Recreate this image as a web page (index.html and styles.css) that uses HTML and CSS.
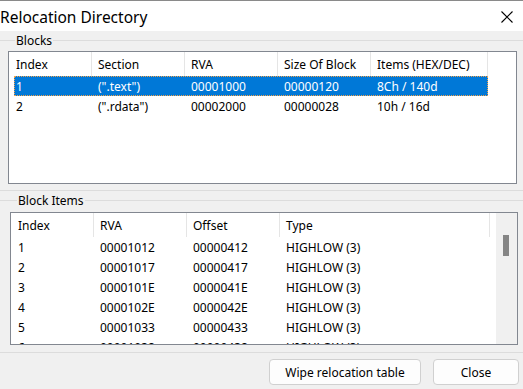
FILE: index.html
```html
<!DOCTYPE html>
<html>
<head>
<meta charset="utf-8">
<link rel="stylesheet" href="styles.css">
</head>
<body>
<div class="window">
  <div class="titlebar">
    <span class="title">Relocation Directory</span>
    <svg class="close-x" width="14" height="14" viewBox="0 0 14 14"><path d="M1.5 1.5 L12.5 12.5 M12.5 1.5 L1.5 12.5" stroke="#000" stroke-width="1.1" fill="none"/></svg>
  </div>

  <fieldset class="group group-blocks">
    <legend>Blocks</legend>
    <div class="list list-blocks">
      <div class="head head-blocks">
        <div class="th">Index</div>
        <div class="th">Section</div>
        <div class="th">RVA</div>
        <div class="th">Size Of Block</div>
        <div class="th">Items (HEX/DEC)</div>
      </div>
      <div class="row row-blocks selected">
        <div class="td first">1</div>
        <div class="td">(".text")</div>
        <div class="td">00001000</div>
        <div class="td">00000120</div>
        <div class="td">8Ch / 140d</div>
      </div>
      <div class="row row-blocks">
        <div class="td first">2</div>
        <div class="td">(".rdata")</div>
        <div class="td">00002000</div>
        <div class="td">00000028</div>
        <div class="td">10h / 16d</div>
      </div>
    </div>
  </fieldset>

  <fieldset class="group group-items">
    <legend>Block Items</legend>
    <div class="list list-items">
      <div class="items-content">
        <div class="head head-items">
          <div class="th">Index</div>
          <div class="th">RVA</div>
          <div class="th">Offset</div>
          <div class="th">Type</div>
        </div>
        <div class="row row-items"><div class="td first">1</div><div class="td">00001012</div><div class="td">00000412</div><div class="td">HIGHLOW (3)</div></div>
        <div class="row row-items"><div class="td first">2</div><div class="td">00001017</div><div class="td">00000417</div><div class="td">HIGHLOW (3)</div></div>
        <div class="row row-items"><div class="td first">3</div><div class="td">0000101E</div><div class="td">0000041E</div><div class="td">HIGHLOW (3)</div></div>
        <div class="row row-items"><div class="td first">4</div><div class="td">0000102E</div><div class="td">0000042E</div><div class="td">HIGHLOW (3)</div></div>
        <div class="row row-items"><div class="td first">5</div><div class="td">00001033</div><div class="td">00000433</div><div class="td">HIGHLOW (3)</div></div>
        <div class="row row-items"><div class="td first">6</div><div class="td">00001038</div><div class="td">00000438</div><div class="td">HIGHLOW (3)</div></div>
      </div>
      <div class="vscroll"><div class="thumb"></div></div>
    </div>
  </fieldset>

  <div class="buttons">
    <button class="btn btn-wipe">Wipe relocation table</button>
    <button class="btn btn-close">Close</button>
  </div>
</div>
</body>
</html>
```

FILE: styles.css
```css
* { box-sizing: border-box; }
html, body {
  margin: 0;
  padding: 0;
  background: #f0f0f0;
  width: 523px;
  height: 389px;
  overflow: hidden;
  font-family: "Noto Sans", "DejaVu Sans", sans-serif;
  font-size: 12px;
  color: #000;
}
.window {
  display: flex;
  flex-direction: column;
  width: 523px;
  height: 389px;
}
.titlebar {
  height: 31px;
  flex: none;
  background: #fff;
  border-top: 1px solid #8a8a8a;
  display: flex;
  align-items: center;
  justify-content: space-between;
  padding: 0 10px 0 0;
}
.title {
  font-size: 15.5px;
  line-height: 20px;
  padding-top: 1px;
}
.close-x { display: block; margin-top: 1px; margin-right: -1px; }

.group {
  margin: 2px 0 0 0;
  border: none;
  border-top: 1px solid #dcdcdc;
  border-bottom: 1px solid #dcdcdc;
  flex: none;
}
.group legend {
  font-size: 12px;
  line-height: 14px;
  padding: 1px 1px 0 1px;
  margin-left: 7px;
}
.group-blocks { padding: 3px 7px 6px 8px; }
.group-items { padding: 4px 5px 7px 10px; }

.list {
  background: #fff;
  border: 1px solid #828790;
  height: 133px;
  overflow: hidden;
}
.list-blocks { width: 509px; }
.list-items { width: 508px; display: flex; }

.head {
  display: grid;
  height: 24px;
}
.head-blocks { grid-template-columns: 83px 93px 93px 93px 117px; }
.head-items { grid-template-columns: 83px 93px 93px 210px; }
.th {
  border-right: 1px solid #e5e5e5;
  line-height: 22px;
  padding-top: 2px;
  padding-left: 6px;
  white-space: nowrap;
}
.th:first-child { padding-left: 7px; }

.row {
  display: grid;
  height: 20px;
  line-height: 19px;
  white-space: nowrap;
}
.row-blocks {
  grid-template-columns: 78px 93px 93px 93px 117px;
  margin-left: 5px;
  width: 474px;
}
.row-items {
  grid-template-columns: 83px 93px 93px 210px;
}
.td { padding-left: 6px; padding-top: 1px; overflow: hidden; }
.row-blocks .td.first { padding-left: 2px; }
.row-items .td.first { padding-left: 7px; }
.row.selected {
  background: #0078d7;
  color: #fff;
  outline: 1px dotted #f3a24a;
  outline-offset: -1px;
}

.items-content { flex: 1; overflow: hidden; }
.vscroll {
  width: 21px;
  flex: none;
  background: #f0f0f0;
  position: relative;
}
.thumb {
  position: absolute;
  left: 7px;
  top: 22px;
  width: 6px;
  height: 21px;
  background: #858585;
}

.buttons {
  display: flex;
  justify-content: flex-end;
  gap: 12px;
  margin-top: 6px;
  padding-right: 4px;
}
.btn {
  height: 26px;
  border: 1px solid #d0d0d0;
  border-radius: 4px;
  background: #fdfdfd;
  font-family: "Noto Sans", "DejaVu Sans", sans-serif;
  font-size: 12px;
  color: #000;
  padding: 0;
}
.btn-wipe { width: 152px; }
.btn-close { width: 86px; }
```
